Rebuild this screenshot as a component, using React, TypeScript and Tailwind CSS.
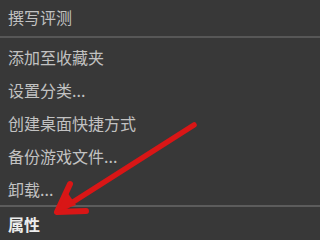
const items = ['添加至收藏夹', '设置分类...', '创建桌面快捷方式', '备份游戏文件...', '卸载...'];

function MenuRow({ label, strong }: { label: string; strong?: boolean }) {
  return (
    <div
      className={`h-[33px] flex items-center pl-[8px] text-[16px] ${
        strong ? 'font-bold text-[#ececec]' : 'text-[#c2c2c2]'
      }`}
    >
      {label}
    </div>
  );
}

function Arrow() {
  // red annotation arrow pointing at the last menu entry
  return (
    <svg className="absolute inset-0 pointer-events-none" width="320" height="240" viewBox="0 0 320 240">
      <g stroke="#d91616" strokeLinecap="round" strokeLinejoin="round" fill="none">
        <line x1="194" y1="125" x2="62" y2="209" strokeWidth="5.5" />
        <polyline points="70,184 57,212 86,211" strokeWidth="6" />
      </g>
      <polygon points="57,212 67,192 76,205" fill="#d91616" />
    </svg>
  );
}

export default function App() {
  return (
    <div
      className="relative w-[320px] h-[240px] overflow-hidden bg-[#383838]"
      style={{ fontFamily: '"Noto Sans CJK SC", "Noto Sans", sans-serif' }}
    >
      <MenuRow label="撰写评测" />
      <div className="h-[7px] pt-[3px]">
        <div className="h-[2px] bg-[#575757]" />
      </div>
      {items.map((label) => (
        <MenuRow key={label} label={label} />
      ))}
      <div className="h-[2px] bg-[#5c5c5c]" />
      <MenuRow label="属性" strong />
      <Arrow />
    </div>
  );
}
